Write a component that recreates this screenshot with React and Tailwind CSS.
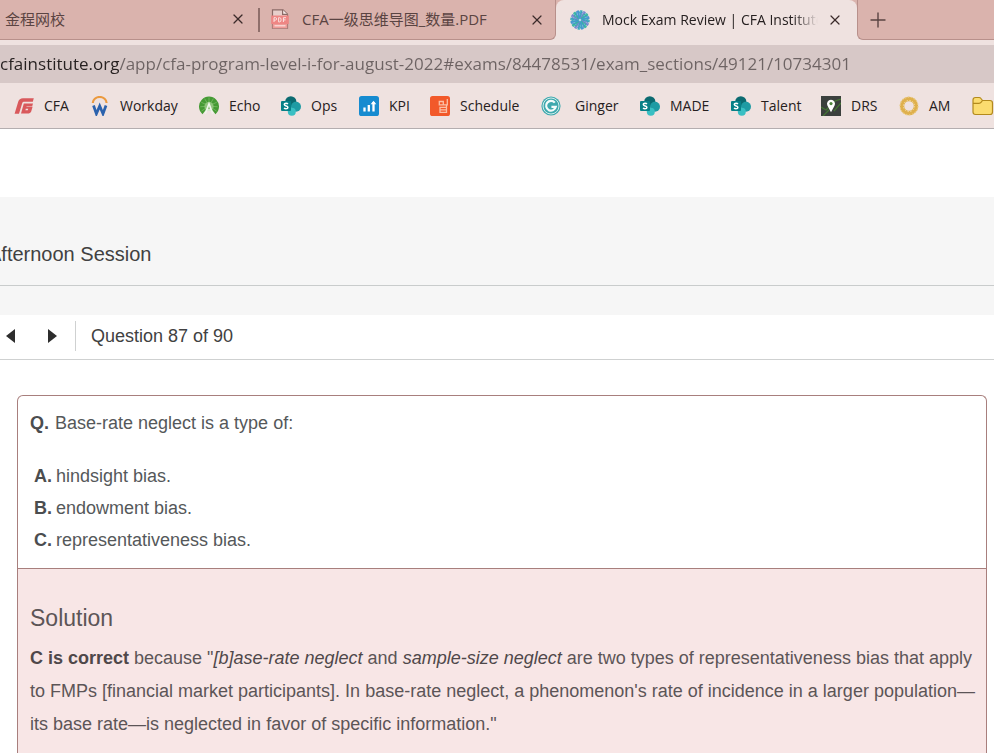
import React from 'react';
import { X, Plus } from 'lucide-react';

const UI_FONT = "font-['Open_Sans','Noto_Sans_CJK_SC',sans-serif]";
const PAGE_FONT = "font-['Liberation_Sans',Arial,sans-serif]";

function PdfIcon() {
  return (
    <svg viewBox="0 0 20 20" className="w-5 h-5 shrink-0" aria-hidden="true">
      <path d="M2.500 .8h10.500L17.500 5.200v14H2.500z" fill="#e8cfcb" stroke="#8b6a66" strokeWidth="1.2" />
      <path d="M12.600.8v4.600H17.500" fill="#f8eeec" stroke="#8b6a66" strokeWidth="1.2" />
      <path d="M1.200 6.500h17.600v8.500H1.200z" fill="#ee8684" />
      <path d="M4 13V8.7h1.6q1 0 1 1.2t-1 1.2H4M8.6 8.7v4.2h1q1.5 0 1.5-2.1t-1.5-2.1zM13.4 13V8.7H16M13.4 10.9h2.2" fill="none" stroke="#fbe3e1" strokeWidth="1" />
      <path d="M2.600 15h14.800v4.300H2.600z" fill="#ee9b97" />
      <path d="M4.500 16.800h11" stroke="#fbe3e1" strokeWidth="1.2" />
    </svg>
  );
}

function InstituteIcon() {
  const colors = ['#37a9bd', '#7487d0', '#35b3a4', '#4796d0'];
  return (
    <svg viewBox="-10 -10 20 20" className="w-5 h-5 shrink-0" aria-hidden="true">
      <circle r="8.5" fill="#b5d9e2" />
      {Array.from({ length: 16 }, (_, i) => (
        <g key={i} transform={`rotate(${i * 22.5})`} stroke={colors[i % 4]} fill="none">
          <path d="M0 -1.5L1.600 -9.600" strokeWidth="2" />
          <path d="M-1.600 -5L.4 -9.600" strokeWidth=".9" />
        </g>
      ))}
    </svg>
  );
}

function CfaIcon() {
  return (
    <svg viewBox="0 0 20 20" className="w-5 h-5 shrink-0" aria-hidden="true">
      <g fill="#d9595c">
        <path d="M.6 17.800L4.200 5.800Q5.200 2.200 9 2.200H19.800L18.800 5.800H10Q8.600 5.800 8.200 7.200L5 17.800z" />
        <path d="M9.800 7.400H19L18.200 10.200H12.600L11.400 14.200H13.800L14.200 12.800H11.800L12.400 10.800H18.600L17.200 15.600Q16.600 17.400 14.800 17.400H7z" />
      </g>
    </svg>
  );
}

function WorkdayIcon() {
  return (
    <svg viewBox="0 0 20 20" className="w-5 h-5 shrink-0" aria-hidden="true">
      <path d="M2.800 7a6.900 6 0 0 1 13.800 0" fill="none" stroke="#eb9a3f" strokeWidth="2.2" />
      <path d="M3.500 9.500l2.900 8.300 3.300-7.800 3.300 7.800 3-8.300" fill="none" stroke="#2b62ad" strokeWidth="2.7" />
    </svg>
  );
}

function EchoIcon() {
  return (
    <svg viewBox="0 0 20 20" className="w-5 h-5 shrink-0" aria-hidden="true">
      <path d="M3.500 18.200A10 10 0 1 1 16.500 18.200L13.600 14.500H6.400z" fill="#459a34" />
      <g stroke="#8cc377" strokeWidth=".6">
        <path d="M10 10V1.500M10 10L5.600 2.600M10 10L14.400 2.600M10 10L2.200 6.200M10 10L17.800 6.200M10 10L1.300 10.800M10 10l8.700.8M10 10L2.500 15M10 10l7.500 5" />
      </g>
      <circle cx="10" cy="10.500" r="4.600" fill="#8fc47b" />
      <path d="M6.200 17.800L10 7.800l3.800 10M7.600 14h4.800" fill="none" stroke="#eff5eb" strokeWidth="1.7" />
    </svg>
  );
}

function SharePointIcon() {
  return (
    <svg viewBox="0 0 20 20" className="w-5 h-5 shrink-0" aria-hidden="true">
      <circle cx="9.8" cy="5.8" r="5.6" fill="#0b6a70" />
      <circle cx="15" cy="10.8" r="5" fill="#1e9ba3" />
      <circle cx="10.8" cy="15.8" r="4" fill="#39bfc3" />
      <rect x="0" y="5" width="10" height="10" rx="1" fill="#078087" />
      <path d="M7 7.9Q6.3 7.3 5 7.3 3.3 7.3 3.3 8.6q0 1 1.8 1.4 1.8.4 1.8 1.5 0 1.3-1.9 1.3-1.2 0-2-.6" fill="none" stroke="#fff" strokeWidth="1.5" />
    </svg>
  );
}

function KpiIcon() {
  return (
    <svg viewBox="0 0 20 20" className="w-5 h-5 shrink-0" aria-hidden="true">
      <rect width="20" height="20" rx="2.6" fill="#168bd0" />
      <path d="M5.5 15.5v-4M9.8 15.5V9M14.5 15.5V6" stroke="#fff" strokeWidth="2.3" />
      <path d="M11.7 8.2l2.8-3.4 2.8 3.4" fill="#fff" />
    </svg>
  );
}

function ScheduleIcon() {
  return (
    <svg viewBox="0 0 20 20" className="w-5 h-5 shrink-0" aria-hidden="true">
      <rect width="20" height="20" rx="2.6" fill="#f2592a" />
      <g fill="none" stroke="#fbc0a6" strokeWidth="1.3">
        <path d="M9.3 5.500h4v3.300h-4zM13.300 8.800h4V3" />
        <path d="M16.500 8.800v7.600M10 11.400h6.500v5H10zM10 13.900h6.500" />
      </g>
    </svg>
  );
}

function GingerIcon() {
  return (
    <svg viewBox="0 0 20 20" className="w-5 h-5 shrink-0" aria-hidden="true">
      <circle cx="10" cy="10" r="9.6" fill="#3fa9ae" />
      <circle cx="10" cy="10" r="8" fill="none" stroke="#d5eeed" strokeWidth="1" />
      <path d="M13.800 6.600A4.900 4.900 0 1 0 14.800 10.800H10.400" fill="none" stroke="#f3fbfa" strokeWidth="2.2" />
    </svg>
  );
}

function DrsIcon() {
  return (
    <svg viewBox="0 0 20 20" className="w-5 h-5 shrink-0" aria-hidden="true">
      <rect width="20" height="20" fill="#3b403d" />
      <path d="M0 11l5 3 9-9 6-2M2 20l6-6M13 15l7-8" fill="none" stroke="#447434" strokeWidth="1.3" />
      <path d="M10 16.2L6.5 9.7a4 4 0 1 1 7 0z" fill="#fff" />
      <circle cx="10" cy="7.6" r="1.6" fill="#4d843b" />
    </svg>
  );
}

function AmIcon() {
  return (
    <svg viewBox="0 0 20 20" className="w-5 h-5 shrink-0" aria-hidden="true">
      <circle cx="10" cy="10" r="7" fill="none" stroke="#dfb04c" strokeWidth="4.4" />
      <circle cx="10" cy="10" r="8.9" fill="none" stroke="#e9cb87" strokeWidth="1.2" strokeDasharray="1.6 1.5" />
      <circle cx="10" cy="10" r="5.6" fill="none" stroke="#f2dba3" strokeWidth="1" strokeDasharray="1.4 1.5" />
    </svg>
  );
}

function FolderIcon() {
  return (
    <svg viewBox="0 0 22 20" className="w-[22px] h-5 shrink-0" aria-hidden="true">
      <path d="M1 16V4q0-2.5 2.5-2.5H7Q8.3 1.5 9 2.500L10.500 4.500H18Q20.500 4.500 20.500 7V16Q20.500 18.500 18 18.500H3.500Q1 18.500 1 16z" fill="#fbdc6f" stroke="#b38a1d" strokeWidth="1.2" />
      <path d="M1 7.300H7Q8.300 7.300 9 6.400L10.500 4.500" fill="none" stroke="#b38a1d" strokeWidth="1.2" />
    </svg>
  );
}

const bookmarks = [
  { label: 'CFA', Icon: CfaIcon, width: 'w-[76px]' },
  { label: 'Workday', Icon: WorkdayIcon, width: 'w-[109px]' },
  { label: 'Echo', Icon: EchoIcon, width: 'w-[82px]' },
  { label: 'Ops', Icon: SharePointIcon, width: 'w-[78px]' },
  { label: 'KPI', Icon: KpiIcon, width: 'w-[71px]' },
  { label: 'Schedule', Icon: ScheduleIcon, width: 'w-[111px]' },
  { label: 'Ginger', Icon: GingerIcon, width: 'w-[99px]' },
  { label: 'MADE', Icon: SharePointIcon, width: 'w-[91px]' },
  { label: 'Talent', Icon: SharePointIcon, width: 'w-[90px]' },
  { label: 'DRS', Icon: DrsIcon, width: 'w-[78px]' },
  { label: 'AM', Icon: AmIcon, width: 'w-[73px]' },
];

const choices = [
  { letter: 'A.', text: 'hindsight bias.' },
  { letter: 'B.', text: 'endowment bias.' },
  { letter: 'C.', text: 'representativeness bias.' },
];

function CloseButton({ label }) {
  return (
    <button aria-label={label} className="shrink-0 text-[#3b2b2a]">
      <X className="w-4 h-4" strokeWidth={1.8} />
    </button>
  );
}

function TabStrip() {
  return (
    <div className="flex h-10 bg-[#efe2e0] text-sm text-[#5a4442] whitespace-nowrap">
      <div className="flex w-[556px] shrink-0 items-center rounded-br-md border-r border-b border-[#b8908b] bg-[#dab3ad] text-[15px]">
        <div className="flex w-[258px] items-center justify-between pl-[5px] pr-3">
          <button>金程网校</button>
          <CloseButton label="Close 金程网校" />
        </div>
        <div className="flex flex-1 items-center justify-between border-l-2 border-[#8f6f6b] h-6 pl-[10px] pr-[10px]">
          <button className="flex items-center gap-3">
            <PdfIcon />
            CFA一级思维导图_数量.PDF
          </button>
          <CloseButton label="Close PDF" />
        </div>
      </div>
      <div className="w-[301px] shrink-0 bg-linear-to-b from-[#dab3ad] from-50% to-[#efe2e0] to-50%">
        <div className="flex h-full items-center justify-between rounded-t-lg bg-[#efe2e0] px-[14px] text-[#262020]">
          <button className="flex w-[248px] items-center gap-3 overflow-hidden mask-r-from-90%">
            <InstituteIcon />
            Mock Exam Review | CFA Institute
          </button>
          <CloseButton label="Close Mock Exam Review" />
        </div>
      </div>
      <div className="flex flex-1 items-center rounded-bl-md border-l border-b border-[#b8908b] bg-[#dab3ad] pl-2">
        <button aria-label="New tab">
          <Plus className="w-6 h-6" strokeWidth={1.4} />
        </button>
      </div>
    </div>
  );
}

function BookmarkBar() {
  return (
    <nav className="flex h-[46px] items-center overflow-hidden border-b border-[#b4aeb0] pl-[14px] text-sm text-[#262020]">
      {bookmarks.map(({ label, Icon, width }) => (
        <a key={label} href="#" className={`flex shrink-0 items-center ${width} ${label === 'Ginger' ? 'gap-[14px]' : 'gap-[10px]'}`}>
          <Icon />
          {label}
        </a>
      ))}
      <button aria-label="More bookmarks">
        <FolderIcon />
      </button>
    </nav>
  );
}

export default function App() {
  return (
    <div className="flex min-h-screen flex-col overflow-x-hidden bg-white">
      <header className={`bg-[#efe2e0] ${UI_FONT}`}>
        <TabStrip />
        <div className="pt-[5px]">
          <div className="flex h-[38px] items-center bg-[#d7c8c7]">
            <input
              type="text"
              aria-label="Address"
              defaultValue="cfainstitute.org/app/cfa-program-level-i-for-august-2022#exams/84478531/exam_sections/49121/10734301"
              className="w-full bg-linear-to-r from-[#262020] from-[119px] to-[#6d6363] to-[119px] bg-clip-text text-[17px] text-transparent outline-none"
            />
          </div>
        </div>
        <BookmarkBar />
      </header>

      <main className={`flex flex-1 flex-col pt-[68px] ${PAGE_FONT}`}>
        <section className="overflow-hidden bg-[#f6f6f6] pb-[29px]">
          <div className="flex h-[89px] items-center border-b border-[#c9cccc] pt-[26px]">
            <h1 className="-ml-3 text-xl text-[#414141]">Afternoon Session</h1>
          </div>
        </section>

        <div className="flex h-[45px] items-center border-b border-[#cfd1d1] pb-[2px] text-[#2d2d2d]">
          <button aria-label="Previous question" className="ml-[6px]">
            <svg viewBox="0 0 9 14" className="w-[9px] h-[14px]" fill="currentColor">
              <path d="M9 0v14L0 7z" />
            </svg>
          </button>
          <button aria-label="Next question" className="ml-[33px]">
            <svg viewBox="0 0 9 14" className="w-[9px] h-[14px]" fill="currentColor">
              <path d="M0 0v14l9-7z" />
            </svg>
          </button>
          <div className="ml-[18px] h-[30px] border-l border-[#cfd1d1]" />
          <h2 className="ml-[15px] text-lg text-[#414141]">Question 87 of 90</h2>
        </div>

        <article className="ml-[17px] mr-[7px] mt-[35px] flex flex-1 flex-col rounded-t-md border border-b-0 border-[#a87f7d] text-lg leading-8 text-[#55585a]">
          <div className="px-3 pt-[11px] pb-3">
            <p className="flex gap-[6px]">
              <strong className="text-[#4b4d4f]">Q.</strong>
              Base-rate neglect is a type of:
            </p>
            <ol className="mt-[21px] pl-1">
              {choices.map(({ letter, text }) => (
                <li key={letter} className="flex gap-1">
                  <strong className="text-[#4b4d4f]">{letter}</strong>
                  {text}
                </li>
              ))}
            </ol>
          </div>
          <div className="flex-1 border-t border-[#a87f7d] bg-[#f8e6e6] px-3 pt-[33px] text-[#5c5557]">
            <h3 className="text-[23px] leading-8">Solution</h3>
            <p className="mt-2 -mr-1 leading-[33px]">
              <strong className="text-[#4f484a]">C is correct</strong> because "<em className="text-[#4f484a]">[b]ase-rate neglect</em> and{' '}
              <em className="text-[#4f484a]">sample-size neglect</em> are two types of representativeness bias that apply to FMPs
              [financial market participants]. In base-rate neglect, a phenomenon's rate of incidence in a larger population—its base
              rate—is neglected in favor of specific information."
            </p>
          </div>
        </article>
      </main>
    </div>
  );
}
